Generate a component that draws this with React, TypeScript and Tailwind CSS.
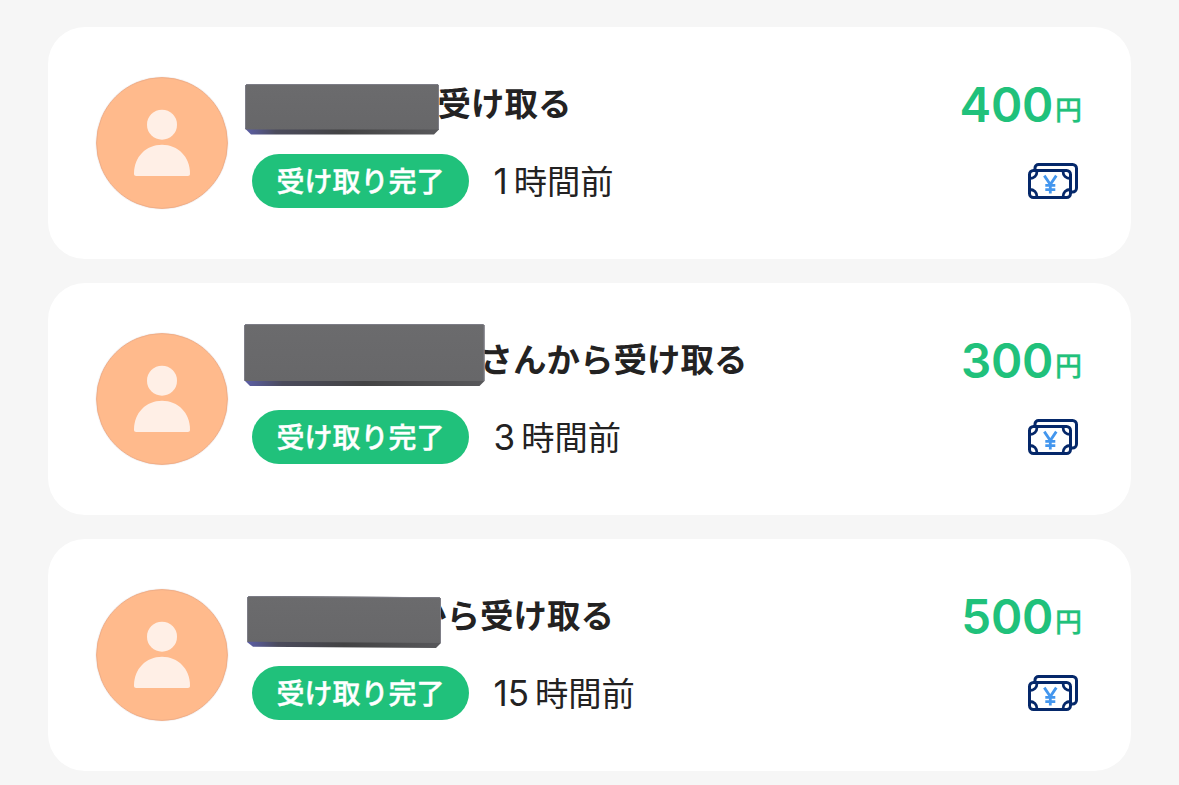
type Bar = { left: string; w: number; h: number; skew: number };

type Transfer = {
  id: number;
  title: string;
  titleClass: string;
  bar: Bar;
  count: string;
  amount: string;
};

const transfers: Transfer[] = [
  {
    id: 1,
    title: '受け取る',
    titleClass: 'pl-[185.5px]',
    bar: { left: '-left-[7px] top-[9px]', w: 194, h: 50.5, skew: 0 },
    count: '1',
    amount: '400',
  },
  {
    id: 2,
    title: 'さんから受け取る',
    titleClass: 'pl-[227.5px]',
    bar: { left: '-left-[8px] -top-[7px]', w: 240.5, h: 62, skew: 0 },
    count: '3',
    amount: '300',
  },
  {
    id: 3,
    title: 'から受け取る',
    titleClass: 'pl-[161px]',
    bar: { left: '-left-[5px] top-[9px]', w: 194, h: 52, skew: 1.2 },
    count: '15',
    amount: '500',
  },
];

function Avatar() {
  return (
    <svg className="size-[134px] shrink-0" viewBox="0 0 134 134">
      <circle cx="67" cy="67" r="66.6" fill="#f4f2f3" />
      <circle cx="67" cy="67" r="65.400" fill="#ffba8c" stroke="#f0ae88" strokeWidth="1" />
      <circle cx="67" cy="48.700" r="15" fill="#ffefe6" />
      <path d="M67 68.700c16 0 28 12 28 29 0 1.500-.8 2.200-2.200 2.200H41.200c-1.400 0-2.200-.7-2.200-2.200 0-17 12-29 28-29z" fill="#ffefe6" />
    </svg>
  );
}

function NameBar({ bar, id }: { bar: Bar; id: number }) {
  const { w, h, skew } = bar;
  return (
    <svg className={`absolute ${bar.left}`} width={w} height={h} viewBox={`0 0 ${w} ${h}`}>
      <defs>
        <linearGradient id={`edge${id}`} x1="0" x2="1" y1="0" y2="0">
          <stop offset="0" stopColor="#5c5fa8" />
          <stop offset="0.16" stopColor="#4b4b5c" />
          <stop offset="0.5" stopColor="#434344" />
          <stop offset="1" stopColor="#58585b" />
        </linearGradient>
        <linearGradient id={`face${id}`} x1="0" x2="0" y1="0" y2="1">
          <stop offset="0" stopColor="#6b6b6d" />
          <stop offset="1" stopColor="#676769" />
        </linearGradient>
      </defs>
      <path d={`M2 0L${w - 1.5} ${skew}L${w} ${skew + 1.5}V${h - 5}L${w - 5} ${h}L6 ${h - skew}L0 ${h - 6}V2Z`} fill={`url(#edge${id})`} />
      <path d={`M1.500 0.500L${w - 1.5} ${skew + 0.5}L${w - 0.5} ${skew + 1.5}V${h - 5}L0.500 ${h - 5 - skew}V1.500Z`} fill={`url(#face${id})`} />
      <path d={`M0.500 ${h - 6}V1.500L1.500 0.500L${w - 1.5} ${skew + 0.5}L${w - 0.5} ${skew + 1.5}V${h - 5}`} fill="none" stroke="#7d7d86" strokeWidth="1" />
    </svg>
  );
}

function CashIcon() {
  return (
    <svg className="h-[38px] w-[52px]" viewBox="0 0 52 38" fill="none">
      <g stroke="#05286a" strokeWidth="3" strokeLinecap="round" strokeLinejoin="round">
        <path d="M8 7.500V6a3.500 3.500 0 0 1 3.500-3.500h34a4 4 0 0 1 4 4V26a4 4 0 0 1-4 4h-1" />
        <rect x="2.500" y="8.500" width="41" height="27" rx="4" />
        <path d="M10 9c0 4.500-3 7.500-7.500 7.500M36 9c0 4.500 3 7.500 7.500 7.500M10 35c0-4.500-3-7.500-7.500-7.500M36 35c0-4.500 3-7.500 7.500-7.500" strokeWidth="2.800" />
      </g>
      <path d="M17.300 13.600L23.300 22.500l6-8.900M23.300 22.300v9.200M18.300 23.400h10M18.300 27.600h10" stroke="#4396ee" strokeWidth="2.800" />
    </svg>
  );
}

function TransferCard({ item }: { item: Transfer }) {
  return (
    <article className="flex h-[232px] items-start rounded-[37px] bg-white pr-[49px] pl-[47px] pt-[49px]">
      <Avatar />
      <div className="ml-[23px] flex flex-1 flex-col">
        <div className={`relative -mt-px mb-px flex h-[56px] items-center whitespace-nowrap text-[33.5px] font-bold text-[#232222] ${item.titleClass}`}>
          <span className="pb-[1px]">{item.title}</span>
          <NameBar bar={item.bar} id={item.id} />
        </div>
        <div className="mt-[22px] flex h-[54px] items-center">
          <span className="flex h-[54px] w-[217px] items-center justify-center rounded-full bg-[#20c17b] pb-[2px] text-[28px] leading-none font-medium text-white [-webkit-text-stroke:0.4px_white]">
            受け取り完了
          </span>
          <span className="ml-[24.5px] flex items-center text-[33.300px] leading-none text-[#232222]">
            <span className="mr-[6px] pt-[1px] font-['Inter'] text-[35px]">{item.count}</span>
            <span className="pb-[3px]">時間前</span>
          </span>
        </div>
      </div>
      <div className="flex flex-col items-end">
        <div className="flex h-[56px] items-baseline text-[#20c17b]">
          <span className="mr-[2px] font-['Inter'] text-[47.5px] leading-[57px] font-semibold tracking-[-0.3px]">{item.amount}</span>
          <span className="relative -top-[2px] text-[27px] leading-none font-medium [-webkit-text-stroke:0.3px_#20c17b]">円</span>
        </div>
        <div className="mt-[30px] mr-[3px]">
          <CashIcon />
        </div>
      </div>
    </article>
  );
}

export default function App() {
  return (
    <main className="flex h-[785px] flex-col gap-[24px] overflow-hidden bg-[#f6f6f6] pt-[27px] pr-[48px] pl-[48px] font-['Noto_Sans_CJK_JP',sans-serif]" lang="ja">
      {transfers.map((item) => (
        <TransferCard key={item.id} item={item} />
      ))}
    </main>
  );
}
